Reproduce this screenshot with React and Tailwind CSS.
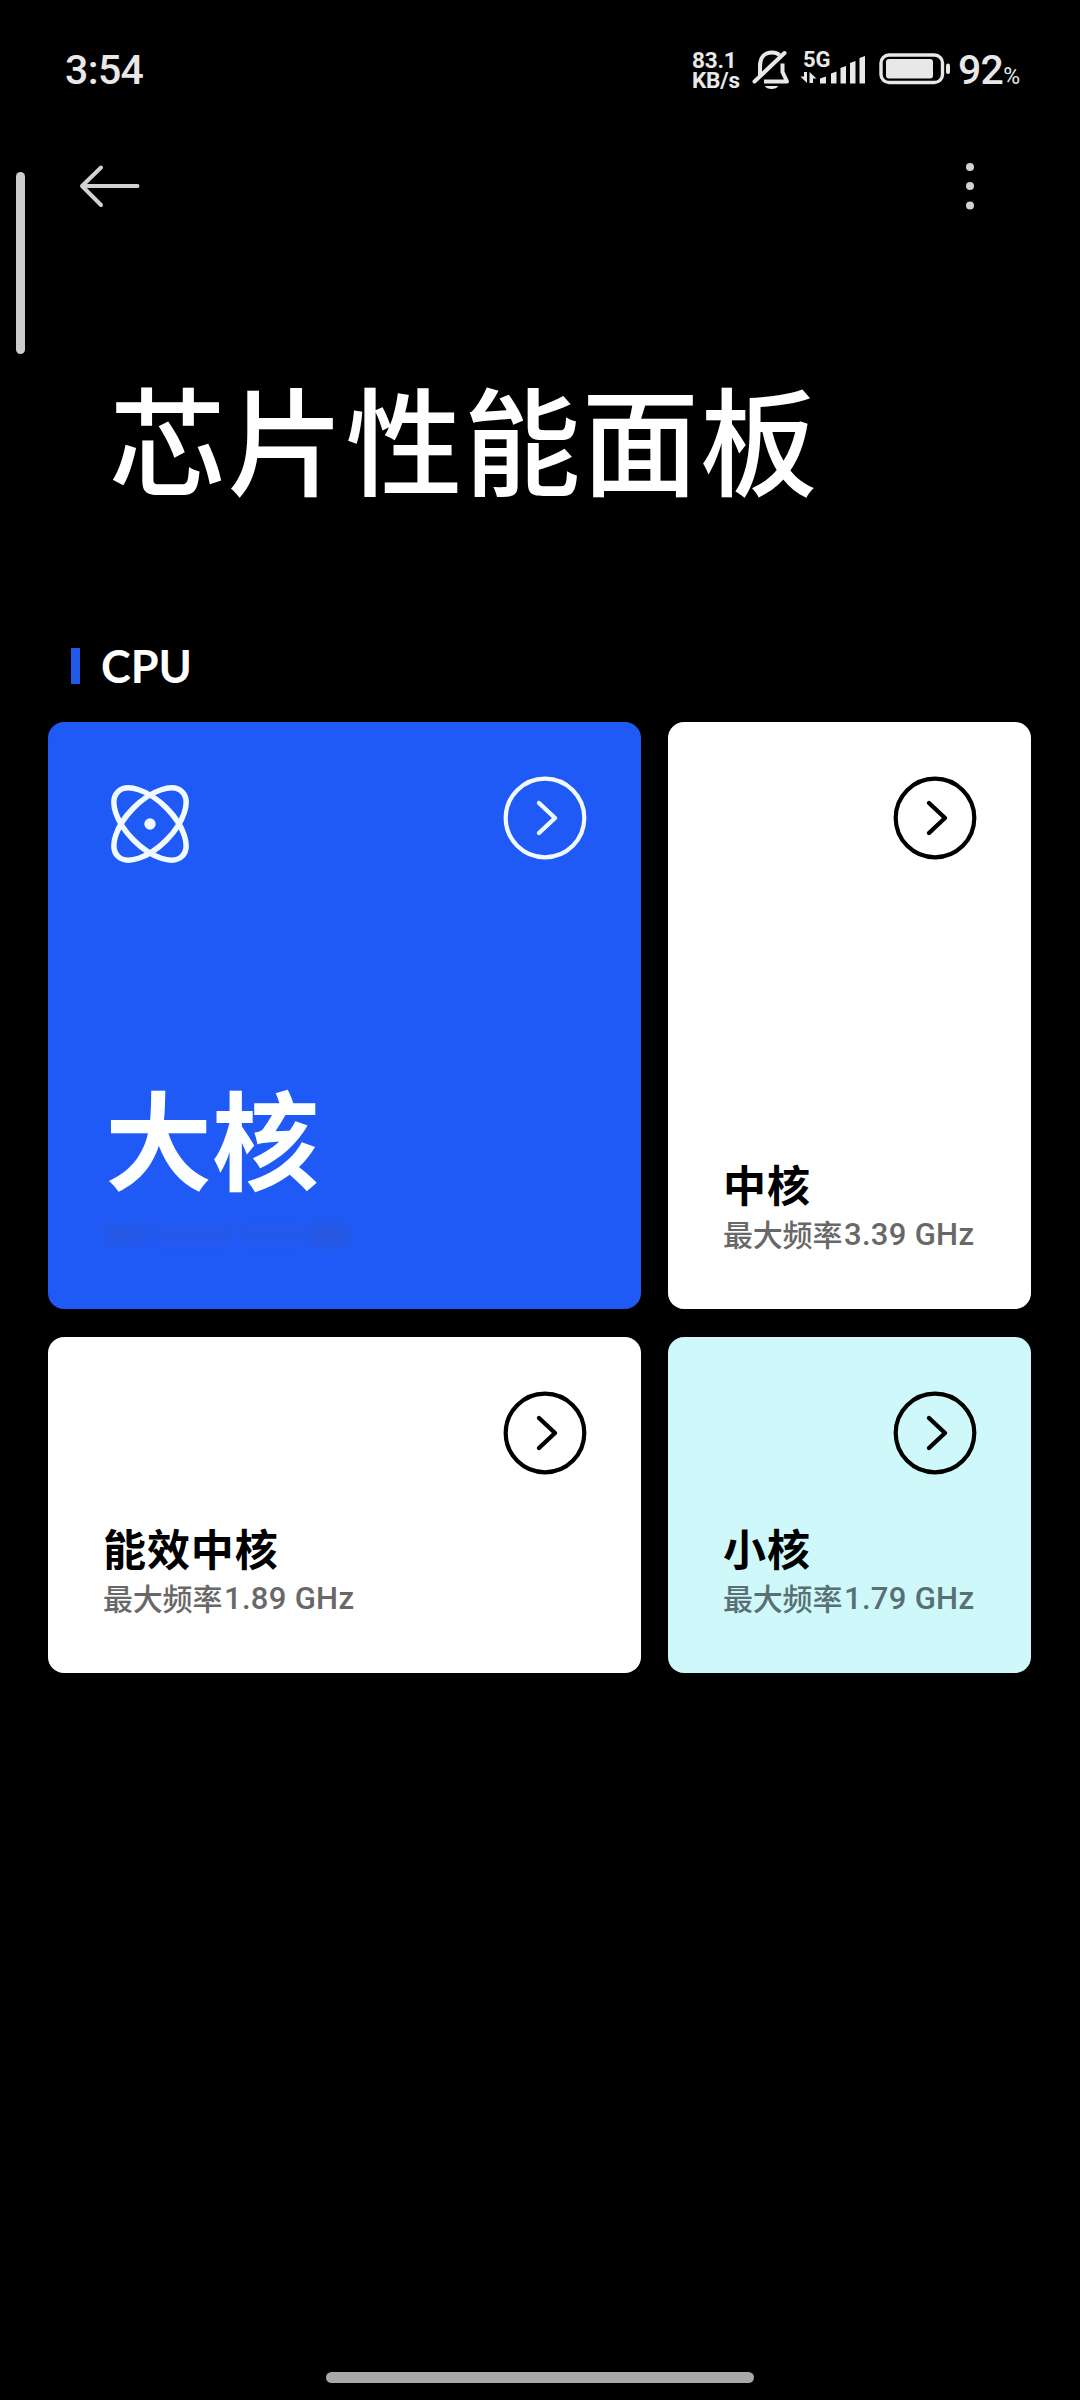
const CJK = "font-['Noto_Sans_CJK_SC',sans-serif]";

function ArrowCircle({ className }) {
  return (
    <svg className={className} width="84" height="84" viewBox="0 0 84 84" fill="none" stroke="currentColor">
      <circle cx="42" cy="42" r="39.3" strokeWidth="4.2" />
      <path d="M36 27L52 42L36 57" strokeWidth="4.4" strokeLinecap="round" strokeLinejoin="round" />
    </svg>
  );
}

function StatusBar() {
  return (
    <header className="flex h-[138px] items-start justify-between pr-[56px] pl-[65px] pt-[48px] text-[#e8e8e8]">
      <div className="mt-px font-[Roboto,sans-serif] text-[41px] leading-[43px] font-medium tracking-[-0.6px]">3:54</div>
      <div className="flex items-start">
        <div className="flex w-[53px] flex-col font-[Roboto,sans-serif] text-[22.500px] leading-[19px] font-bold tracking-[-0.2px] whitespace-nowrap">
          <div className="mt-[3px]">83.1</div>
          <div className="mt-px">KB/s</div>
        </div>
        <svg className="ml-[7px]" width="38" height="44" viewBox="0 0 38 44" fill="none" stroke="currentColor">
          <path d="M8 28V18C8 9 13 4.500 20 4.500C23 4.500 25.500 5.300 27.500 7" strokeWidth="4" />
          <path d="M30.500 15.500V24L35 33.500H12" strokeWidth="4" strokeLinejoin="round" />
          <path d="M2.500 33.500L32.500 5" strokeWidth="4" strokeLinecap="round" />
          <path d="M13 38H26C25 42 14 42 13 38Z" fill="currentColor" stroke="none" />
        </svg>
        <div className="ml-[10px] flex w-[68px] flex-col">
          <div className="mt-[2px] ml-[3px] h-[18px] font-[Roboto,sans-serif] text-[22px] leading-[20px] font-bold">5G</div>
          <svg className="-mt-[14px]" width="68" height="30" viewBox="0 0 68 30" fill="currentColor">
            <path d="M4 18H7V29L0.500 22.500H4Z" />
            <path d="M9.500 29V18L16.500 24.500H13V29Z" />
            <path d="M20 24.500L26 22.500V29.500H20ZM31 19.500L36.500 17.500V29.500H31ZM40.500 14L46 12V29.500H40.500ZM50 9L55.500 7V29.500H50ZM59.500 4L65 2V29.500H59.500Z" />
          </svg>
        </div>
        <svg className="mt-[5px] ml-[11px]" width="73" height="32" viewBox="0 0 73 32" fill="none">
          <rect x="2" y="2" width="61.500" height="27.500" rx="8" stroke="currentColor" strokeWidth="3.400" />
          <rect x="7" y="6" width="47" height="19.500" rx="3" fill="currentColor" />
          <rect x="67" y="10.500" width="4" height="10.500" rx="2" fill="currentColor" />
        </svg>
        <div className="mt-px ml-[6px] flex w-[66px] items-baseline font-[Roboto,sans-serif] whitespace-nowrap">
          <span className="text-[41px] leading-[43px] font-medium tracking-[-0.7px]">92</span>
          <span className="text-[23px] leading-[22px]">%</span>
        </div>
      </div>
    </header>
  );
}

function Card({ name, freq, className, freqClass }) {
  return (
    <section className={`relative flex flex-col justify-end rounded-[16px] pb-[52px] pl-[55px] ${className}`}>
      <ArrowCircle className="absolute top-[54px] right-[54px] text-black" />
      <h3 className={`${CJK} text-[43px] leading-[50px] font-bold tracking-[0.9px] text-black`}>{name}</h3>
      <p className={`flex h-[49px] whitespace-nowrap ${freqClass}`}>
        <span className={`${CJK} w-[121px] text-[30px] leading-[50px] font-medium tracking-[-0.2px]`}>最大频率</span>
        <span className="font-[Roboto,sans-serif] text-[31px] leading-[53px] font-medium tracking-[0.3px]">{freq}</span>
      </p>
    </section>
  );
}

export default function App() {
  return (
    <main className="relative flex h-[2400px] w-[1080px] flex-col overflow-hidden bg-black">
      <StatusBar />
      <div className="absolute top-[172px] left-[16px] h-[182px] w-[9px] rounded-full bg-[#cccccc]" />
      <nav className="flex h-[96px] items-center justify-between pr-[104px] pl-[78px] text-[#d2d2d2]">
        <svg width="64" height="48" viewBox="0 0 64 48" fill="none" stroke="currentColor" strokeWidth="4" strokeLinecap="round" strokeLinejoin="round">
          <path d="M23 5.500L4 24L23 43M4 24H59.500" />
        </svg>
        <svg width="12" height="50" viewBox="0 0 12 50" fill="currentColor">
          <circle cx="6" cy="6" r="4" />
          <circle cx="6" cy="25" r="4" />
          <circle cx="6" cy="44.500" r="4" />
        </svg>
      </nav>
      <h1 className={`${CJK} mt-[132px] ml-[109px] text-[117px] leading-[140px] font-medium tracking-[1.2px] whitespace-nowrap text-white`}>芯片性能面板</h1>
      <div className="mt-[132px] ml-[71px] flex h-[56px] items-center">
        <i className="h-[36px] w-[9px] bg-[#2159e8]" />
        <h2 className="ml-[21px] font-[Lato,sans-serif] text-[45px] leading-[56px] font-bold text-white">CPU</h2>
      </div>
      <div className="mt-[28px] ml-[48px] grid w-[983px] grid-cols-[593px_363px] grid-rows-[587px_336px] gap-x-[27px] gap-y-[28px]">
        <section className="relative flex flex-col justify-between rounded-[16px] bg-[#205af6] pt-[62px] pb-[59px] pl-[57px] text-[#f1fbff]">
          <ArrowCircle className="absolute top-[54px] right-[54px]" />
          <svg width="90" height="80" viewBox="0 0 90 80" fill="none" stroke="currentColor" strokeWidth="5.500">
            <ellipse cx="45" cy="40" rx="45.500" ry="23" transform="rotate(45 45 40)" />
            <ellipse cx="45" cy="40" rx="45.500" ry="23" transform="rotate(-45 45 40)" />
            <circle cx="45" cy="40" r="5.700" fill="currentColor" stroke="none" />
          </svg>
          <div>
            <h3 className={`${CJK} text-[107px] leading-[130px] font-bold text-[#fcfeff]`}>大核</h3>
            <div className="mt-[19px] flex h-[30px] w-[250px] items-center gap-[8px] blur-[5px]">
              <i className="h-[20px] w-[40px] bg-[#2a58d6]/50" />
              <i className="h-[18px] w-[80px] bg-[#2a58d6]/40" />
              <i className="h-[16px] w-[60px] bg-[#2a58d6]/40" />
              <i className="h-[22px] w-[40px] bg-[#2a58d6]/60" />
            </div>
          </div>
        </section>
        <Card name="中核" freq="3.39 GHz" className="bg-white" freqClass="text-[#686868]" />
        <Card name="能效中核" freq="1.89 GHz" className="bg-white" freqClass="text-[#686868]" />
        <Card name="小核" freq="1.79 GHz" className="bg-[#cff8fa]" freqClass="text-[#587073]" />
      </div>
      <div className="mx-auto mt-auto mb-[17px] h-[11px] w-[428px] rounded-full bg-[#a9a9a9]" />
    </main>
  );
}
